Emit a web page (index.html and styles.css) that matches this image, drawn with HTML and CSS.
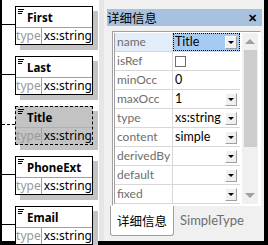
FILE: index.html
```html
<!DOCTYPE html>
<html lang="zh-CN">
<head>
    <meta charset="UTF-8">
    <title>Schema</title>
    <link rel="stylesheet" href="styles.css">
</head>
<body>
    <div class="frame">
        <div class="diagram">
            <div class="node">
                <span class="link"></span>
                <div class="box">
                    <div class="head"><svg class="seq" width="6" height="5" viewBox="0 0 6 5"><path d="M0 0.5H6M0 2.5H5M0 4.5H4" stroke="#000" stroke-width="1"/></svg>First</div>
                    <div class="row"><span class="key">type</span><span class="val">xs:string</span></div>
                </div>
            </div>
            <div class="node">
                <span class="link"></span>
                <div class="box">
                    <div class="head"><svg class="seq" width="6" height="5" viewBox="0 0 6 5"><path d="M0 0.5H6M0 2.5H5M0 4.5H4" stroke="#000" stroke-width="1"/></svg>Last</div>
                    <div class="row"><span class="key">type</span><span class="val">xs:string</span></div>
                </div>
            </div>
            <div class="node optional">
                <span class="link"></span>
                <div class="box">
                    <div class="head"><svg class="seq" width="6" height="5" viewBox="0 0 6 5"><path d="M0 0.5H6M0 2.5H5M0 4.5H4" stroke="#000" stroke-width="1"/></svg>Title</div>
                    <div class="row"><span class="key">type</span><span class="val">xs:string</span></div>
                </div>
            </div>
            <div class="node">
                <span class="link"></span>
                <div class="box">
                    <div class="head"><svg class="seq" width="6" height="5" viewBox="0 0 6 5"><path d="M0 0.5H6M0 2.5H5M0 4.5H4" stroke="#000" stroke-width="1"/></svg>PhoneExt</div>
                    <div class="row"><span class="key">type</span><span class="val">xs:string</span></div>
                </div>
            </div>
            <div class="node">
                <span class="link"></span>
                <div class="box">
                    <div class="head"><svg class="seq" width="6" height="5" viewBox="0 0 6 5"><path d="M0 0.5H6M0 2.5H5M0 4.5H4" stroke="#000" stroke-width="1"/></svg>Email</div>
                    <div class="row"><span class="key">type</span><span class="val">xs:string</span></div>
                </div>
            </div>
        </div>

        <div class="split"></div>

        <div class="panel">
            <div class="bar">
                <span class="bar-title">详细信息</span>
                <span class="close">✕</span>
            </div>

            <div class="grid-wrap">
                <div class="grid">
                    <div class="prop selected"><span class="label">name</span><span class="value">Title<i class="drop"></i></span></div>
                    <div class="prop"><span class="label">isRef</span><span class="value"><i class="check"></i></span></div>
                    <div class="prop"><span class="label">minOcc</span><span class="value">0</span></div>
                    <div class="prop"><span class="label">maxOcc</span><span class="value">1<i class="drop"></i></span></div>
                    <div class="prop"><span class="label">type</span><span class="value">xs:string<i class="drop"></i></span></div>
                    <div class="prop"><span class="label">content</span><span class="value">simple<i class="drop"></i></span></div>
                    <div class="prop"><span class="label">derivedBy</span><span class="value"><i class="drop"></i></span></div>
                    <div class="prop"><span class="label">default</span><span class="value"><i class="drop"></i></span></div>
                    <div class="prop"><span class="label">fixed</span><span class="value"><i class="drop"></i></span></div>
                </div>
                <div class="scroll">
                    <span class="arrow up"></span>
                    <span class="thumb"></span>
                    <span class="arrow down"></span>
                </div>
            </div>

            <div class="tabs">
                <span class="tab active">详细信息</span>
                <span class="tab">SimpleType</span>
            </div>
        </div>
    </div>
</body>
</html>
```

FILE: styles.css
```css
body {
    margin: 0;
    background-color: #000;
    font-family: Lato, 'Noto Sans CJK SC', sans-serif;
    width: 268px;
    height: 245px;
    overflow: hidden;
}
.frame {
    display: flex;
    margin-left: 2px;
    width: 262px;
    height: 241px;
}

/* diagram */
.diagram {
    width: 101px;
    background-color: #fff;
    padding-top: 6px;
    box-sizing: border-box;
}
.node {
    display: flex;
    align-items: flex-start;
    margin-bottom: 11px;
}
.link {
    width: 13px;
    margin-top: 18px;
    border-top: 1px solid #000;
}
.box {
    width: 76px;
    border: 1px solid #000;
    background-color: #fff;
    box-shadow: 5px 5px 0 #c4c4c4;
}
.head {
    height: 20px;
    display: flex;
    align-items: flex-end;
    gap: 3px;
    padding-left: 2px;
    font-family: 'Noto Sans', sans-serif;
    font-size: 11.5px;
    font-weight: bold;
    line-height: 19px;
}
.seq {
    align-self: flex-start;
    margin-top: 2px;
}
.row {
    display: flex;
    height: 16px;
    border-top: 1px solid #a0a0a0;
    font-family: 'Noto Sans', sans-serif;
    font-size: 12px;
    line-height: 16px;
}
.key {
    width: 27px;
    color: #9a9a9a;
    border-right: 1px solid #a0a0a0;
    text-align: center;
}
.val {
    padding-left: 2px;
}
.optional .link {
    border-top-style: dashed;
}
.optional .box {
    border-style: dashed;
    background-color: #c3c3c3;
}
.optional .row {
    border-top-color: #b0b0b0;
}

.split {
    width: 5px;
    background-color: #e6e6e6;
}

/* properties panel */
.panel {
    flex: 1;
    background-color: #f0f0f0;
    display: flex;
    flex-direction: column;
    padding: 9px 2px 0 3px;
}
.bar {
    height: 17px;
    background-color: #a8c1de;
    display: flex;
    align-items: center;
    justify-content: space-between;
    padding-right: 5px;
}
.bar-title {
    font-size: 12.5px;
    color: #000;
    font-family: 'Noto Sans CJK SC', sans-serif;
}
.close {
    font-size: 11px;
    font-weight: bold;
}
.grid-wrap {
    margin: 5px 1px 0 5px;
    height: 175px;
    display: flex;
    border: 1px solid #a0a0a0;
    border-right-color: #fff;
    border-bottom-color: #fff;
    background-color: #fff;
    padding: 1px 2px 1px 1px;
    box-sizing: border-box;
}
.grid {
    width: 125px;
    border-left: 1px solid #a0a0a0;
}
.prop {
    display: flex;
    height: 19px;
    border-bottom: 1px solid #d8d8d8;
    box-sizing: border-box;
    font-size: 12.5px;
    line-height: 18px;
}
.label {
    width: 58px;
    color: #6d6d6d;
    padding-left: 2px;
    border-right: 1px solid #d8d8d8;
    box-sizing: border-box;
    white-space: nowrap;
    overflow: hidden;
    font-size: 12px;
}
.value {
    flex: 1;
    display: flex;
    justify-content: space-between;
    align-items: center;
    padding-left: 2px;
    color: #000;
}
.selected .label {
    background-color: #e3edf9;
}
.selected .value {
    background-color: #a6cbf2;
    outline: 1px dotted #000;
    outline-offset: -1px;
}
.drop {
    width: 12px;
    height: 13px;
    margin-right: 3px;
    margin-left: auto;
    background-color: #f0f0f0;
    border: 1px solid #fff;
    border-right-color: #a0a0a0;
    border-bottom-color: #a0a0a0;
    box-sizing: border-box;
    position: relative;
}
.drop::after {
    content: "";
    position: absolute;
    left: 2px;
    top: 4px;
    border-left: 3px solid transparent;
    border-right: 3px solid transparent;
    border-top: 3px solid #000;
}
.check {
    width: 11px;
    height: 11px;
    border: 1px solid #6d6d6d;
    box-sizing: border-box;
    background-color: #fff;
}
.scroll {
    width: 16px;
    margin-left: 2px;
    background-color: #f0f0f0;
    display: flex;
    flex-direction: column;
    align-items: center;
}
.arrow {
    width: 0;
    height: 0;
    border-left: 5px solid transparent;
    border-right: 5px solid transparent;
    margin: 6px 0;
}
.arrow.up {
    border-bottom: 5px solid #a0a0a0;
}
.arrow.down {
    border-top: 5px solid #a0a0a0;
    margin-top: auto;
}
.thumb {
    width: 13px;
    height: 97px;
    background-color: #cdcdcd;
}
.tabs {
    display: flex;
    margin-left: 3px;
    font-size: 13px;
    white-space: nowrap;
}
.tab {
    padding: 5px 6px 5px;
    color: #6d6d6d;
    line-height: 19px;
}
.tab.active {
    background-color: #fff;
    color: #000;
    border: 1px solid #a0a0a0;
    border-top: none;
    border-radius: 0 0 3px 3px;
    font-family: 'Noto Sans CJK SC', sans-serif;
    font-size: 12.5px;
}
```
